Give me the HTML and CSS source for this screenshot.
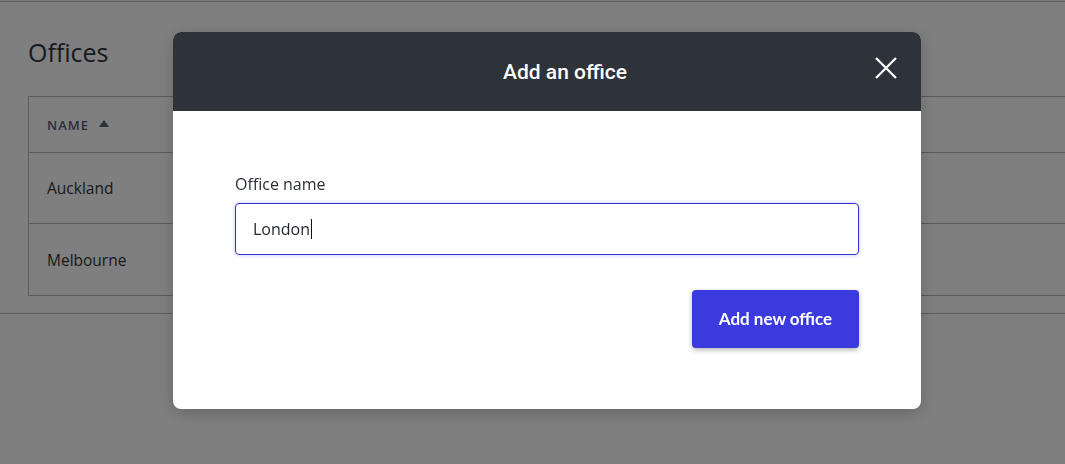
FILE: index.html
```html
<!DOCTYPE html>
<html>
<head>
<meta charset="utf-8">
<link rel="stylesheet" href="styles.css">
</head>
<body>
<div class="page">
  <h1 class="title">Offices</h1>
  <table class="table">
    <thead>
      <tr><th><span class="th-inner">NAME <span class="sort"></span></span></th></tr>
    </thead>
    <tbody>
      <tr class="row1"><td>Auckland</td></tr>
      <tr class="row2"><td>Melbourne</td></tr>
    </tbody>
  </table>
</div>
<div class="overlay">
  <div class="modal">
    <div class="modal-header">
      <h2 class="modal-title">Add an office</h2>
      <button class="close" aria-label="Close">
        <svg width="24" height="24" viewBox="0 0 24 24"><path d="M2 2 L22 22 M22 2 L2 22" stroke="#fff" stroke-width="2.2" fill="none"/></svg>
      </button>
    </div>
    <div class="modal-body">
      <label class="label">Office name</label>
      <div class="input"><span class="value">London</span><span class="caret"></span></div>
      <div class="actions">
        <button class="primary">Add new office</button>
      </div>
    </div>
  </div>
</div>
</body>
</html>
```

FILE: styles.css
```css
html, body {
  margin: 0;
  padding: 0;
  background: #ffffff;
  font-family: "Open Sans", "Noto Sans", sans-serif;
}
.page {
  border-top: 1px solid #b4b6bc;
  margin-top: 1px;
  padding: 0 0 0 28px;
  border-bottom: 1px solid #b4b6bc;
  height: 313px;
  box-sizing: border-box;
}
.title {
  margin: 34px 0 0 0;
  font-size: 25px;
  line-height: 32px;
  font-weight: 400;
  color: #30343e;
  font-family: "Open Sans", sans-serif;
}
.table {
  margin-top: 28px;
  border-collapse: collapse;
  width: 100%;
}
.table th, .table td {
  border: 1px solid #b4b6bc;
  border-right: none;
  text-align: left;
  padding: 0 0 0 18px;
}
.table th {
  height: 55px;
  font-size: 13px;
  font-weight: 600;
  letter-spacing: 1px;
  color: #555d75;
}
.th-inner {
  display: inline-flex;
  align-items: center;
  gap: 10px;
}
.sort {
  width: 0;
  height: 0;
  border-left: 5px solid transparent;
  border-right: 5px solid transparent;
  border-bottom: 7px solid #5a6070;
  margin-top: -2px;
}
.table td {
  font-size: 15.5px;
  color: #30343e;
}
.row1 td { height: 70px; }
.row2 td { height: 71px; }

.overlay {
  position: fixed;
  inset: 0;
  background: rgba(0, 0, 0, 0.5);
  padding: 32px 0 0 173px;
}
.modal {
  width: 748px;
  border-radius: 8px;
  overflow: hidden;
  background: #ffffff;
  box-shadow: 0 4px 16px rgba(0,0,0,0.2);
}
.modal-header {
  position: relative;
  height: 79px;
  background: #2e3239;
  display: flex;
  align-items: center;
  justify-content: center;
}
.modal-title {
  margin: 0;
  color: #ffffff;
  font-family: Roboto, "Liberation Sans", sans-serif;
  font-size: 21px;
  font-weight: 500;
  padding-left: 36px;
}
.close {
  position: absolute;
  right: 23px;
  top: 24px;
  background: none;
  border: none;
  padding: 0;
  width: 24px;
  height: 24px;
}
.close svg { display: block; }
.modal-body {
  padding: 63px 62px 61px 62px;
  display: flex;
  flex-direction: column;
}
.label {
  font-size: 16px;
  color: #2b2f38;
  line-height: 20px;
  margin-bottom: 9px;
}
.input {
  height: 52px;
  box-sizing: border-box;
  border: 1px solid #3434c8;
  border-radius: 4px;
  box-shadow: 0 0 4px rgba(80, 80, 255, 0.35);
  display: flex;
  align-items: center;
  padding-left: 17px;
  font-size: 16px;
  color: #1f2330;
}
.caret {
  display: inline-block;
  width: 1px;
  height: 20px;
  background: #111;
  margin-left: 1px;
}
.actions {
  display: flex;
  justify-content: flex-end;
  margin-top: 35px;
}
.primary {
  width: 167px;
  height: 58px;
  border: none;
  border-radius: 4px;
  background: #3a3ade;
  color: #ffffff;
  font-family: Lato, sans-serif;
  font-size: 17px;
  font-weight: 700;
  padding-bottom: 2px;
  box-shadow: 0 2px 5px rgba(0,0,0,0.3);
}
```
